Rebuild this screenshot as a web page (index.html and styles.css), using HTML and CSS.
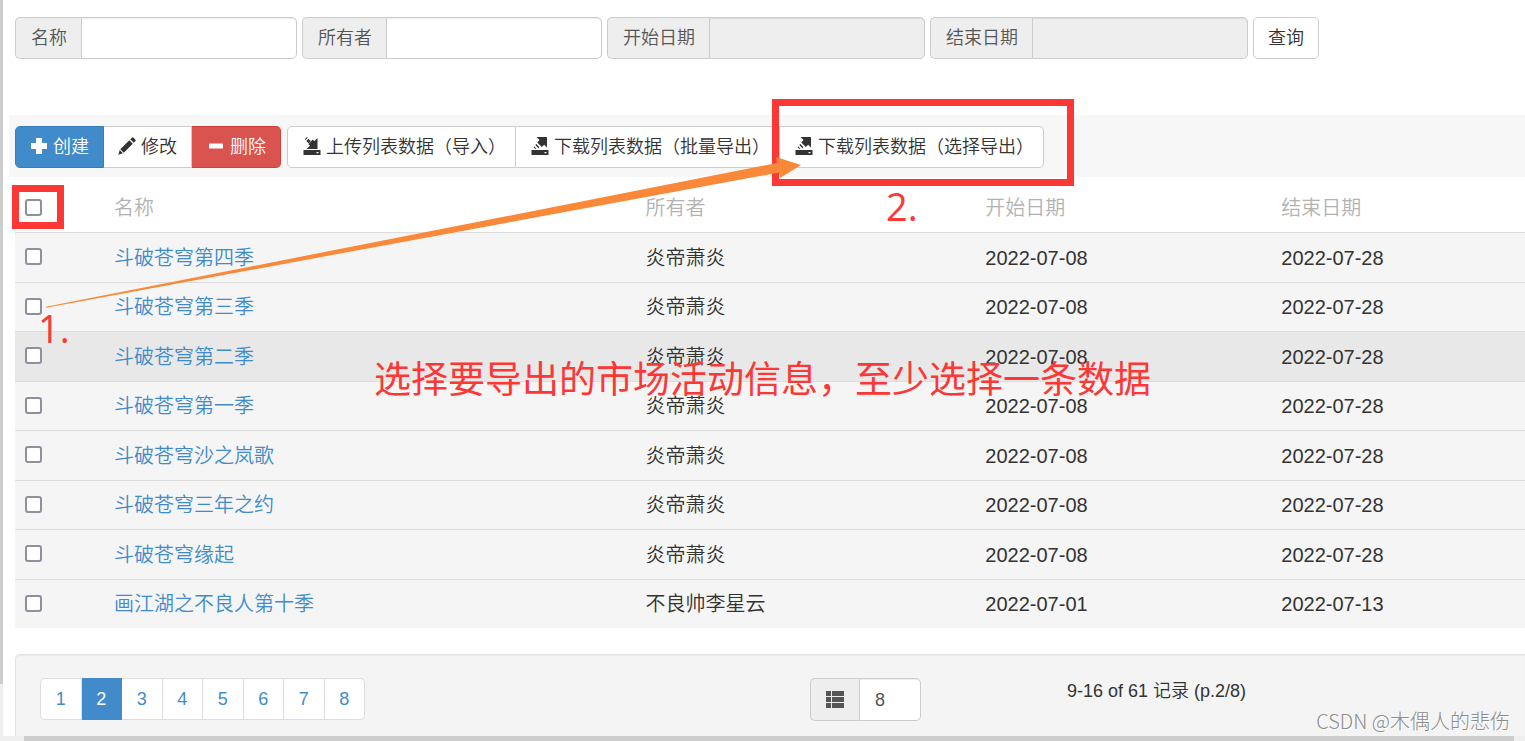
FILE: index.html
```
<!DOCTYPE html>
<html lang="zh-CN">
<head>
<meta charset="utf-8">
<title>市场活动列表</title>
<link rel="stylesheet" href="styles.css">
</head>
<body>
<svg class="sprite" aria-hidden="true">
  <symbol id="i-plus" viewBox="0 0 18 18"><path d="M6 1h6v5h5v6h-5v5H6v-5H1V6h5z"/></symbol>
  <symbol id="i-minus" viewBox="0 0 18 18"><path d="M2.500 6.500h13q.500 0 .5.500v4q0 .5-.5.500h-13q-.5 0-.5-.5V7q0-.5.5-.5z"/></symbol>
  <symbol id="i-pencil" viewBox="0 0 18 18"><path d="M11.300 3.200l3.500 3.500-9 9-3.500-3.500zM12.300 2.200L14 .5q.6-.5 1.200 0l2.300 2.300q.5.600 0 1.200L15.800 5.700zM1.700 13.100l3.200 3.200L.3 17.700z"/></symbol>
  <symbol id="i-import" viewBox="0 0 18 18"><path d="M14.500 1V12H3.500L7 8.700 5.300 7 9.500 2.800 11.500 4zM1.800 2.300L4 .1 4.700.8 2.500 3zM3.300 4L5.500 1.800 7.700 4 5.500 6.200zM.5 13h17v5H.5zM13.500 15v1.200h2V15z" fill-rule="evenodd"/></symbol>
  <symbol id="i-export" viewBox="0 0 18 18"><path d="M5.500 0H16v10.500L13.200 7.700 10.800 10 6.300 5.500 8.500 3zM5.300 7L8.500 10.200 7.500 11.200 4.300 8zM3.300 9.500L5.300 11.500 4.500 12 2.500 10.300zM.5 13h17v5H.5zM13.500 15v1.200h2V15z" fill-rule="evenodd"/></symbol>
  <symbol id="i-list" viewBox="0 0 18 18"><path d="M0 0h5v5H0zM6 0h12v5H6zM0 6h5v5H0zM6 6h12v5H6zM0 12h5v5H0zM6 12h12v5H6z"/></symbol>
</svg>
<div class="viewport">
  <div class="vbar"><span class="vbar-thumb"></span></div>
  <main class="content">
    <form class="search">
      <div class="field"><label for="name">名称</label><input id="name" type="text"></div>
      <div class="field"><label for="owner">所有者</label><input id="owner" type="text"></div>
      <div class="field"><label for="start">开始日期</label><input id="start" type="text" readonly></div>
      <div class="field"><label for="end">结束日期</label><input id="end" type="text" readonly></div>
      <button class="btn query" type="button">查询</button>
    </form>

    <div class="toolbar">
      <div class="group">
        <button class="btn primary" type="button"><svg class="icon"><use href="#i-plus"/></svg>创建</button>
        <button class="btn" type="button"><svg class="icon"><use href="#i-pencil"/></svg>修改</button>
        <button class="btn danger" type="button"><svg class="icon"><use href="#i-minus"/></svg>删除</button>
      </div>
      <div class="group transfer">
        <button class="btn" type="button"><svg class="icon"><use href="#i-import"/></svg>上传列表数据（导入）</button>
        <button class="btn" type="button"><svg class="icon"><use href="#i-export"/></svg>下载列表数据（批量导出）</button>
        <button class="btn" type="button"><svg class="icon"><use href="#i-export"/></svg>下载列表数据（选择导出）</button>
      </div>
    </div>

    <table class="list">
      <colgroup><col class="c-check"><col class="c-name"><col class="c-owner"><col class="c-start"><col></colgroup>
      <thead>
        <tr><th><input type="checkbox" aria-label="全选"></th><th>名称</th><th>所有者</th><th>开始日期</th><th>结束日期</th></tr>
      </thead>
      <tbody>
        <tr><td><input type="checkbox" aria-label="斗破苍穹第四季"></td><td><a href="#">斗破苍穹第四季</a></td><td>炎帝萧炎</td><td>2022-07-08</td><td>2022-07-28</td></tr>
        <tr><td><input type="checkbox" aria-label="斗破苍穹第三季"></td><td><a href="#">斗破苍穹第三季</a></td><td>炎帝萧炎</td><td>2022-07-08</td><td>2022-07-28</td></tr>
        <tr class="hover"><td><input type="checkbox" aria-label="斗破苍穹第二季"></td><td><a href="#">斗破苍穹第二季</a></td><td>炎帝萧炎</td><td>2022-07-08</td><td>2022-07-28</td></tr>
        <tr><td><input type="checkbox" aria-label="斗破苍穹第一季"></td><td><a href="#">斗破苍穹第一季</a></td><td>炎帝萧炎</td><td>2022-07-08</td><td>2022-07-28</td></tr>
        <tr><td><input type="checkbox" aria-label="斗破苍穹沙之岚歌"></td><td><a href="#">斗破苍穹沙之岚歌</a></td><td>炎帝萧炎</td><td>2022-07-08</td><td>2022-07-28</td></tr>
        <tr><td><input type="checkbox" aria-label="斗破苍穹三年之约"></td><td><a href="#">斗破苍穹三年之约</a></td><td>炎帝萧炎</td><td>2022-07-08</td><td>2022-07-28</td></tr>
        <tr><td><input type="checkbox" aria-label="斗破苍穹缘起"></td><td><a href="#">斗破苍穹缘起</a></td><td>炎帝萧炎</td><td>2022-07-08</td><td>2022-07-28</td></tr>
        <tr><td><input type="checkbox" aria-label="画江湖之不良人第十季"></td><td><a href="#">画江湖之不良人第十季</a></td><td>不良帅李星云</td><td>2022-07-01</td><td>2022-07-13</td></tr>
      </tbody>
    </table>

    <div class="pager">
      <nav class="pages">
        <a href="#">1</a><a href="#" class="active">2</a><a href="#">3</a><a href="#">4</a><a href="#">5</a><a href="#">6</a><a href="#">7</a><a href="#">8</a>
      </nav>
      <div class="size">
        <label for="size" aria-label="每页条数"><svg class="icon"><use href="#i-list"/></svg></label><input id="size" type="text" value="8">
      </div>
      <p class="total">9-16 of 61 记录 (p.2/8)</p>
    </div>
  </main>
</div>
<div class="hbar"><span class="hbar-thumb"></span></div>

<div class="notes">
  <div class="box box-check"></div>
  <div class="box box-export"></div>
  <svg class="arrow" viewBox="0 0 760 155"><path d="M1 152.800L732 9 731 3 756 11 735 24 734 18.500 1 153.800z"/></svg>
  <span class="note one">1.</span>
  <span class="note two">2.</span>
  <span class="note text">选择要导出的市场活动信息，至少选择一条数据</span>
  <span class="watermark">CSDN @木偶人的悲伤</span>
</div>
</body>
</html>
```
FILE: styles.css
```
* { box-sizing: border-box; }

body {
  margin: 0;
  min-height: 100vh;
  display: flex;
  flex-direction: column;
  position: relative;
  overflow: hidden;
  background: #fff;
  color: #333;
  font: 350 18px/24px "Liberation Sans", "Noto Sans CJK SC", sans-serif;
}

button, input { font: inherit; color: inherit; }
a { color: #428bca; text-decoration: none; }

.sprite { position: absolute; width: 0; height: 0; }
.icon { width: 18px; height: 18px; flex: none; fill: currentColor; }

.viewport { flex: 1; display: flex; }
.vbar { width: 3px; background: #efefef; }
.vbar-thumb { display: block; height: 93%; background: #cdcdcd; }
.content { flex: 1; min-width: 0; display: flex; flex-direction: column; padding-top: 17px; }

.hbar { height: 5px; padding: 0 11px 0 24px; background: #efefef; }
.hbar-thumb { display: block; height: 100%; background: #cdcdcd; }

/* search */
.search { display: flex; gap: 5px; padding-left: 12px; margin-bottom: 56px; }
.field, .size { display: flex; height: 42px; }
.field label, .size label {
  display: flex;
  align-items: center;
  padding: 0 14px 0 15px;
  border: 1px solid #ccc;
  border-right: 0;
  border-radius: 5px 0 0 5px;
  background: #eee;
  color: #555;
}
.field input, .size input {
  width: 216px;
  padding: 0 15px;
  border: 1px solid #ccc;
  border-radius: 0 5px 5px 0;
  background: #fff;
  color: #555;
  box-shadow: inset 0 1px 1px rgba(0, 0, 0, .075);
}
.field input:read-only { background: #eee; }

.btn {
  display: flex;
  align-items: center;
  gap: 5px;
  height: 42px;
  padding: 0 14px;
  border: 1px solid #ccc;
  background: #fff;
}
.btn .icon { margin-bottom: 2px; }
.query { border-radius: 5px; }

/* toolbar */
.toolbar { display: flex; gap: 6px; margin-left: 6px; padding: 11px 0 9px 6px; background: #f7f7f7; }
.group { display: flex; }
.group .btn + .btn { border-left: 0; }
.group .btn:first-child { border-radius: 5px 0 0 5px; }
.group .btn:last-child { border-radius: 0 5px 5px 0; }
.transfer .btn { gap: 5px; padding: 0 9px 0 15px; }
.primary { background: #428bca; border-color: #357ebd; color: #fff; }
.danger { padding: 0 14px 0 15px; background: #d9534f; border-color: #d43f3a; color: #fff; }

/* list */
.list {
  width: calc(100% - 12px);
  margin-left: 12px;
  table-layout: fixed;
  border-collapse: separate;
  border-spacing: 0;
  font-size: 20px;
}
.c-check { width: 5.9%; }
.c-name { width: 35.2%; }
.c-owner { width: 22.5%; }
.c-start { width: 19.6%; }
.list th, .list td { padding: 0 10px; text-align: left; font-weight: 350; vertical-align: middle; }
.list th { height: 55px; padding-top: 6px; color: #b3b3b3; }
.list td { height: 49px; border-top: 1px solid #ddd; background: #f5f5f5; }
.list td:first-child { padding-bottom: 2px; }
.list tr:nth-child(odd) td { height: 50px; }
.list .hover td { background: #e8e8e8; }
.list input {
  appearance: none;
  display: block;
  width: 17px;
  height: 17px;
  margin: 0;
  border: 2px solid #8f8f9d;
  border-radius: 3px;
  background: #fff;
}

/* pager */
.pager {
  flex: 1;
  display: grid;
  grid-template-columns: 770fr 257fr 458fr;
  align-items: start;
  margin: 26px 0 0 12px;
  padding: 23px 0 12px 24px;
  border: 1px solid #e3e3e3;
  border-width: 1px 0 0 1px;
  border-radius: 5px 0 0 0;
  background: #f4f4f4;
  box-shadow: inset 0 1px 1px rgba(0, 0, 0, .05);
}
.pages { display: flex; width: 325px; height: 42px; }
.pages a {
  flex: 1;
  display: flex;
  align-items: center;
  justify-content: center;
  border: 1px solid #ddd;
  border-left: 0;
  background: #fff;
}
.pages a:first-child { border-left: 1px solid #ddd; border-radius: 5px 0 0 5px; }
.pages a:last-child { border-radius: 0 5px 5px 0; }
.pages .active { background: #428bca; border-color: #428bca; color: #fff; }
.size label { padding: 0 15px; }
.size input { width: 62px; }
.size { height: 43px; }
.total { margin: 0; padding-top: 1px; }

/* annotations lying over the page */
.notes { position: absolute; inset: 0; overflow: hidden; pointer-events: none; }
.box { position: absolute; border: 7px solid #fc3837; }
.box-check { left: 12px; top: 185px; width: 52px; height: 44px; }
.box-export { left: 772px; top: 99px; width: 302px; height: 87px; }
.arrow { position: absolute; left: 45px; top: 154px; width: 760px; height: 155px; fill: #f98838; }
.note {
  position: absolute;
  color: #fc3837;
  font: 400 38px/48px "Open Sans", "Noto Sans CJK SC", sans-serif;
  white-space: nowrap;
}
.one { left: 38px; top: 304px; }
.two { left: 886px; top: 182px; }
.text { left: 374px; top: 353px; font: 400 37px/48px "Noto Sans CJK SC", sans-serif; }
.watermark {
  position: absolute;
  right: 15px;
  bottom: 5px;
  color: #8c8c8c;
  font: 300 20px/30px "Noto Sans CJK SC", sans-serif;
  text-shadow: 1px 1px 0 #fff;
}
```
